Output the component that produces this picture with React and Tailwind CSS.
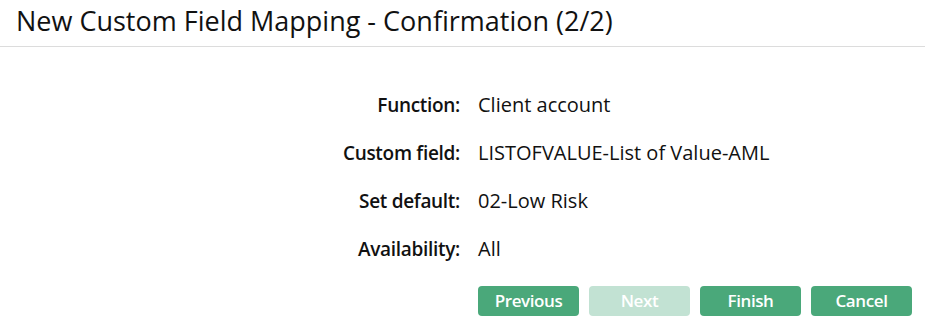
import React from 'react';

const rows = [
  { label: 'Function:', value: 'Client account' },
  { label: 'Custom field:', value: 'LISTOFVALUE-List of Value-AML' },
  { label: 'Set default:', value: '02-Low Risk' },
  { label: 'Availability:', value: 'All' },
];

const buttons = [
  { name: 'Previous', disabled: false },
  { name: 'Next', disabled: true },
  { name: 'Finish', disabled: false },
  { name: 'Cancel', disabled: false },
];

export default function App() {
  return (
    <div className="w-[925px] h-[327px] bg-white text-[#111] font-['Open_Sans',sans-serif] overflow-hidden">
      <div className="h-[47px] border-b border-[#dcdcdc] px-[16px] pt-[3px]">
        <h1 className="text-[27px] leading-[36px]">
          New Custom Field Mapping - Confirmation (2/2)
        </h1>
      </div>

      <div className="grid grid-cols-[460px_1fr] gap-x-[18px] gap-y-[20px] pt-[44px] leading-[28px]">
        {rows.map((row) => (
          <React.Fragment key={row.label}>
            <div className="text-right text-[19px] font-semibold tracking-[-0.3px]">{row.label}</div>
            <div className="text-[20px]">{row.value}</div>
          </React.Fragment>
        ))}
      </div>

      <div className="flex justify-end gap-[10px] pr-[13px] pt-[23px]">
        {buttons.map((b) => (
          <button
            key={b.name}
            className={
              'w-[101px] h-[30px] rounded-[4px] text-white text-[17px] font-semibold tracking-[-0.4px] ' +
              (b.disabled ? 'bg-[#c2e2d3]' : 'bg-[#4aa87a]')
            }
          >
            {b.name}
          </button>
        ))}
      </div>
    </div>
  );
}
